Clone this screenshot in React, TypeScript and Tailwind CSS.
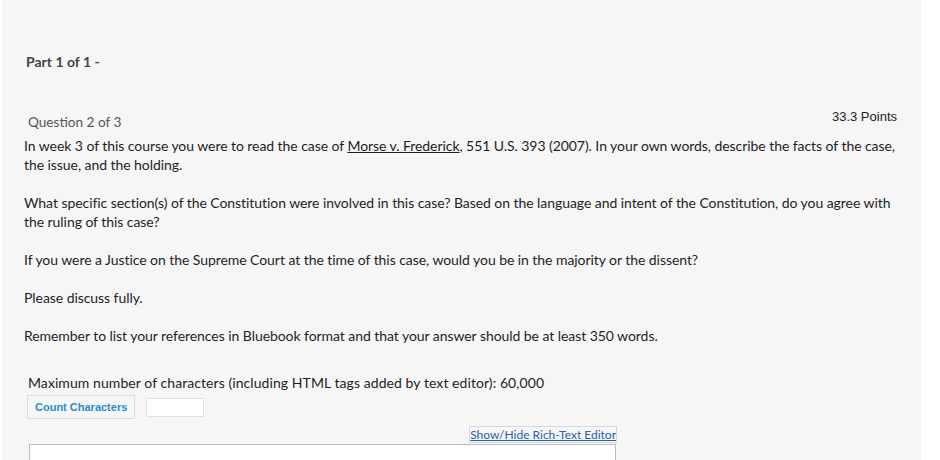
export default function App() {
  return (
    <div className="h-[460px] w-[940px] overflow-hidden bg-white">
      <div className="ml-[2px] h-[460px] w-[919px] bg-[#f6f6f6] font-['Lato','Liberation_Sans',sans-serif] text-[14px] text-[#1e1e1e]">
        <div className="pl-[24px] pt-[53px] text-[14px] font-bold leading-[18px] text-[#444]">
          Part 1 of 1 -
        </div>

        <div className="mt-[36px] flex items-start justify-between pl-[26px] pr-[24px]">
          <div className="pt-[6px] text-[13.6px] leading-[19px] text-[#555]">Question 2 of 3</div>
          <div className="font-['Liberation_Sans',sans-serif] text-[13px] leading-[19px] text-[#222]">
            33.3 Points
          </div>
        </div>

        <div className="mt-[4px] w-[895px] pl-[22px] leading-[19px] tracking-[-0.06px]">
          <p className="mb-[19px]">
            In week 3 of this course you were to read the case of{" "}
            <span className="underline">Morse v. Frederick</span>, 551 U.S. 393
            (2007). In your own words, describe the facts of the case, the issue,
            and the holding.
          </p>
          <p className="mb-[19px]">
            What specific section(s) of the Constitution were involved in this
            case? Based on the language and intent of the Constitution, do you
            agree with the ruling of this case?
          </p>
          <p className="mb-[19px]">
            If you were a Justice on the Supreme Court at the time of this case,
            would you be in the majority or the dissent?
          </p>
          <p className="mb-[19px]">Please discuss fully.</p>
          <p>
            Remember to list your references in Bluebook format and that your
            answer should be at least 350 words.
          </p>
        </div>

        <div className="mt-[28px] pl-[26px] leading-[19px] tracking-[0.07px]">
          Maximum number of characters (including HTML tags added by text
          editor): 60,000
        </div>

        <div className="mt-[3px] flex items-center gap-[11px] pl-[25px]">
          <button className="h-[24px] border border-[#dcdcdc] bg-[#f6f6f6] px-[7px] font-['Liberation_Sans',sans-serif] text-[11px] font-bold text-[#2a8ccf]">
            Count Characters
          </button>
          <div className="h-[19px] w-[58px] border border-[#e2e2e2] bg-white" />
        </div>

        <div className="w-[615px] pt-[4px] text-right">
          <span className="border border-[#d8d8d8] text-[12px] leading-[14px] text-[#2563a8] underline">
            Show/Hide Rich-Text Editor
          </span>
        </div>

        <div className="ml-[27px] mt-[0px] h-[40px] w-[587px] border border-[#bdbdbd] bg-white" />
      </div>
    </div>
  );
}
